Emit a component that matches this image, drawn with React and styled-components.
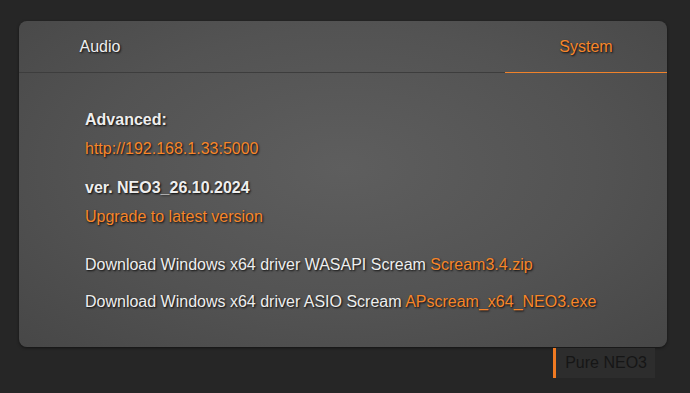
import styled, { createGlobalStyle } from 'styled-components';

const GlobalStyle = createGlobalStyle`
	html, body {
		margin: 0;
		padding: 0;
		background: #262626;
		font-family: "Liberation Sans", Arial, sans-serif;
	}
`

const tabs = ["Audio", "", "", "System"];

const App = () => {
	const active = "System";

	return(
		<Page>
			<GlobalStyle />
			<Card>
				<TabBar>
					{tabs.map((t, i) => (
						<Tab key={i} className={t === active ? 'active' : ''}>{t}</Tab>
					))}
				</TabBar>
				<Content>
					<Group>
						<Label>Advanced:</Label>
						<Link>http://192.168.1.33:5000</Link>
					</Group>
					<Group>
						<Label>ver. NEO3_26.10.2024</Label>
						<Link>Upgrade to latest version</Link>
					</Group>
					<Downloads>
						<Line>Download Windows x64 driver WASAPI Scream <Link>Scream3.4.zip</Link></Line>
						<Line>Download Windows x64 driver ASIO Scream <Link>APscream_x64_NEO3.exe</Link></Line>
					</Downloads>
				</Content>
			</Card>
			<Footer>
				<Badge>Pure NEO3</Badge>
			</Footer>
		</Page>
	)
}

const Page = styled.div`
	padding: 21px 23px 0 19px;
	width: 690px;
	height: 393px;
	box-sizing: border-box;
	overflow: hidden;
`

const Card = styled.div`
	width: 648px;
	height: 326px;
	border-radius: 8px;
	background: radial-gradient(ellipse at 50% 45%, #5e5e5e 0%, #535353 55%, #474747 100%);
	box-shadow: 0 1px 3px rgba(0,0,0,0.5);
	color: #eee;
	text-shadow: 1px 1px 2px rgba(0,0,0,0.9);
	overflow: hidden;
`

const TabBar = styled.div`
	display: grid;
	grid-template-columns: repeat(4, 1fr);
	height: 52px;
	box-shadow: inset 0 -1px 0 #3d3d3d;
`

const Tab = styled.div`
	display: flex;
	align-items: center;
	justify-content: center;
	padding-bottom: 1px;
	font-size: 16px;
	color: #eee;

	&.active{
		color: #f7862a;
		box-shadow: inset 0 -1px 0 #f0822a;
	}
`

const Content = styled.div`
	padding: 38px 0 0 66px;
	display: flex;
	flex-direction: column;
`

const Group = styled.div`
	display: flex;
	flex-direction: column;
	gap: 12px;
	margin-bottom: 22px;
`

const Label = styled.div`
	font-size: 16px;
	font-weight: bold;
	line-height: 17px;
`

const Link = styled.span`
	color: #f7862a;
	font-size: 16px;
	line-height: 17px;
	cursor: pointer;
`

const Downloads = styled.div`
	display: flex;
	flex-direction: column;
	gap: 20px;
	margin-top: 9px;
`

const Line = styled.div`
	font-size: 16px;
	line-height: 17px;
`

const Footer = styled.div`
	display: flex;
	justify-content: flex-end;
	padding-right: 12px;
	margin-top: 1px;
`

const Badge = styled.div`
	background: #2d2d2d;
	color: #161616;
	border-left: 3px solid #f07a22;
	font-size: 16px;
	height: 30px;
	line-height: 30px;
	padding: 0 8px 0 9px;
	box-sizing: border-box;
`

export default App;
